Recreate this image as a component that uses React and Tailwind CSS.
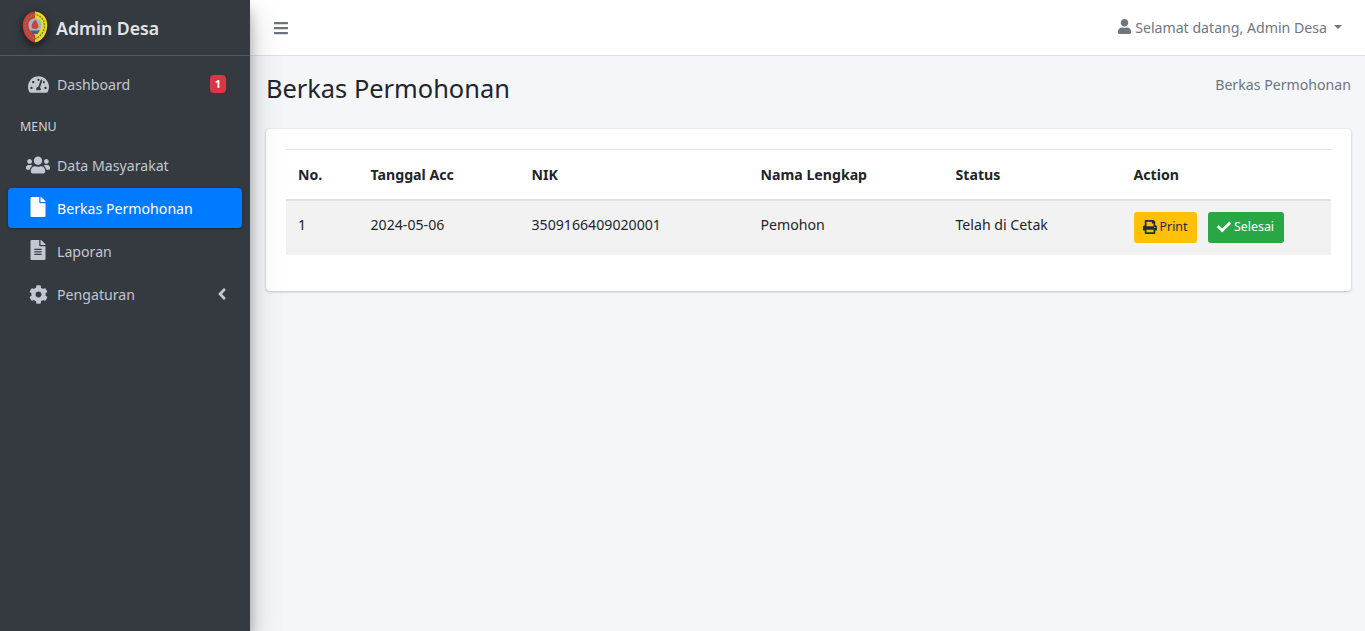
import React from "react";
import { FaTachometerAlt, FaUsers, FaFile, FaFileAlt, FaCog, FaAngleLeft, FaBars, FaUser, FaPrint, FaCheck } from "react-icons/fa";

const font = { fontFamily: '"Noto Sans", sans-serif' };

function Logo() {
  return (
    <svg width="26" height="32" viewBox="0 0 26 32" className="drop-shadow-[0_3px_4px_rgba(0,0,0,0.6)]">
      <path d="M13 0.5C5 1.5 0.8 7 0.8 14.5C0.8 23 6 30 13 31.5Z" fill="#d9353a" />
      <path d="M13 0.5C21 1.5 25.2 7 25.2 14.5C25.2 23 20 30 13 31.5Z" fill="#f1d91f" />
      <path d="M13 3.5C7 4.5 3.5 9 3.5 14.5C3.5 21 8 26 13 28C18 26 22.5 21 22.5 14.5C22.5 9 19 4.5 13 3.5Z" fill="none" stroke="#5c8f52" strokeWidth="1.5" strokeDasharray="2 1" />
      <path d="M13 7C9 8 6.5 10 6.5 13.5C6.5 18 9 22 13 24C17 22 19.5 18 19.5 13.5C19.5 10 17 8 13 7Z" fill="#9fb8c6" />
      <path d="M13 8.5C11 11 9.5 13 9.5 15.5C9.5 17 11 18 13 18C15 18 16.5 17 16.5 15.5C16.5 13 15 11 13 8.5Z" fill="#c9463f" />
      <path d="M8 19.5H18L15.5 23H10.5Z" fill="#55606b" />
    </svg>
  );
}

function NavItem({ icon, label, active, children }) {
  return (
    <a className={`flex h-10 items-center rounded px-4 ${active ? "bg-[#007bff] text-white shadow-[0_1px_3px_rgba(0,0,0,0.3)]" : "text-[#c2c7d0]"}`}>
      <span className="-ml-[2px] flex w-[35px] shrink-0 justify-center text-[20px]">{icon}</span>
      <span className="flex-1 pt-[2px] text-[14.15px] leading-6">{label}</span>
      {children}
    </a>
  );
}

const th = "h-[50px] px-3 text-left align-middle text-[14.15px] font-bold text-[#212529]";
const td = "h-[55px] px-3 pb-[6px] align-middle text-[14.15px] text-[#212529]";

export default function App() {
  return (
    <div style={font} className="flex h-[631px] overflow-hidden bg-[#f4f6f9]">
      <aside className="relative z-10 w-[250px] shrink-0 bg-[#343a40] shadow-[0_14px_28px_rgba(0,0,0,0.25),0_10px_10px_rgba(0,0,0,0.22)]">
        <div className="flex h-[56px] items-center border-b border-[#4f5962] pb-[1px] pl-[22px]">
          <Logo />
          <span className="ml-[8px] pt-[2px] text-[17.7px] font-semibold text-[#e2e5e8]">Admin Desa</span>
        </div>
        <nav className="px-2 pt-2">
          <NavItem icon={<FaTachometerAlt className="-ml-[2px] text-[21px]" />} label="Dashboard">
            <span className="flex h-[18px] w-4 items-center justify-center rounded bg-[#dc3545] text-[11px] font-bold text-white">1</span>
          </NavItem>
          <div className="flex h-[41px] items-center px-3 pt-[6px] text-[12.4px] text-[#d0d4db]">MENU</div>
          <div className="flex flex-col gap-[3px]">
            <NavItem icon={<FaUsers className="-ml-[3px] text-[24px]" />} label="Data Masyarakat" />
            <NavItem active icon={<FaFile className="-ml-[4px] -mt-[2px]" />} label="Berkas Permohonan" />
            <NavItem icon={<FaFileAlt className="-ml-[4px] -mt-[2px]" />} label="Laporan" />
            <NavItem icon={<FaCog className="-ml-[3px] text-[19px]" />} label="Pengaturan">
              <FaAngleLeft className="-mr-[5px] text-[18px]" />
            </NavItem>
          </div>
        </nav>
      </aside>

      <div className="min-w-0 flex-1">
        <header className="flex h-[56px] items-center justify-between border-b border-[#dee2e6] bg-white pl-[23px] pr-[23px]">
          <FaBars className="text-[16px] text-[#6c757d]" />
          <div className="flex items-center text-[14.15px] text-[#6f777e]">
            <FaUser className="mr-[3px] -mt-[2px] text-[15px]" />
            <span>Selamat datang, Admin Desa</span>
            <span className="ml-[7px] h-0 w-0 border-x-[4px] border-t-[4px] border-x-transparent border-t-[#6f777e]" />
          </div>
        </header>

        <main className="pl-[16px] pr-[14px]">
          <div className="flex h-[73px] items-start justify-between">
            <h1 className="pt-[13px] text-[25.4px] leading-[38px] text-[#212529]">Berkas Permohonan</h1>
            <span className="pt-[17px] text-[14.15px] leading-6 text-[#6c757d]">Berkas Permohonan</span>
          </div>
          <section className="rounded bg-white p-[20px] pb-[36px] shadow-[0_0_1px_rgba(0,0,0,0.125),0_1px_3px_rgba(0,0,0,0.2)]">
            <table className="w-full table-fixed border-collapse">
              <colgroup>
                <col className="w-[72.5px]" />
                <col className="w-[161px]" />
                <col className="w-[229px]" />
                <col className="w-[195px]" />
                <col className="w-[178px]" />
                <col />
              </colgroup>
              <thead>
                <tr className="border-t border-b-[2px] border-t-[#dee2e6] border-b-[#dee2e6]">
                  <th className={th}>No.</th>
                  <th className={th}>Tanggal Acc</th>
                  <th className={th}>NIK</th>
                  <th className={th}>Nama Lengkap</th>
                  <th className={th}>Status</th>
                  <th className={th}>Action</th>
                </tr>
              </thead>
              <tbody>
                <tr className="bg-[#f2f2f2]">
                  <td className={td}>1</td>
                  <td className={td}>2024-05-06</td>
                  <td className={td}>3509166409020001</td>
                  <td className={td}>Pemohon</td>
                  <td className={td}>Telah di Cetak</td>
                  <td className="h-[55px] px-3 align-middle">
                    <div className="flex gap-[11px]">
                      <button className="flex h-[31px] w-[63px] items-center justify-center gap-[3px] rounded-[3px] bg-[#ffc107] text-[12.4px] text-[#1f2d3d]">
                        <FaPrint className="-mt-[2px] text-[14px]" />Print
                      </button>
                      <button className="flex h-[31px] w-[76px] items-center justify-center gap-[3px] rounded-[3px] bg-[#28a745] text-[12.4px] text-white">
                        <FaCheck className="-mt-[2px] text-[14px]" />Selesai
                      </button>
                    </div>
                  </td>
                </tr>
              </tbody>
            </table>
          </section>
        </main>
      </div>
    </div>
  );
}
